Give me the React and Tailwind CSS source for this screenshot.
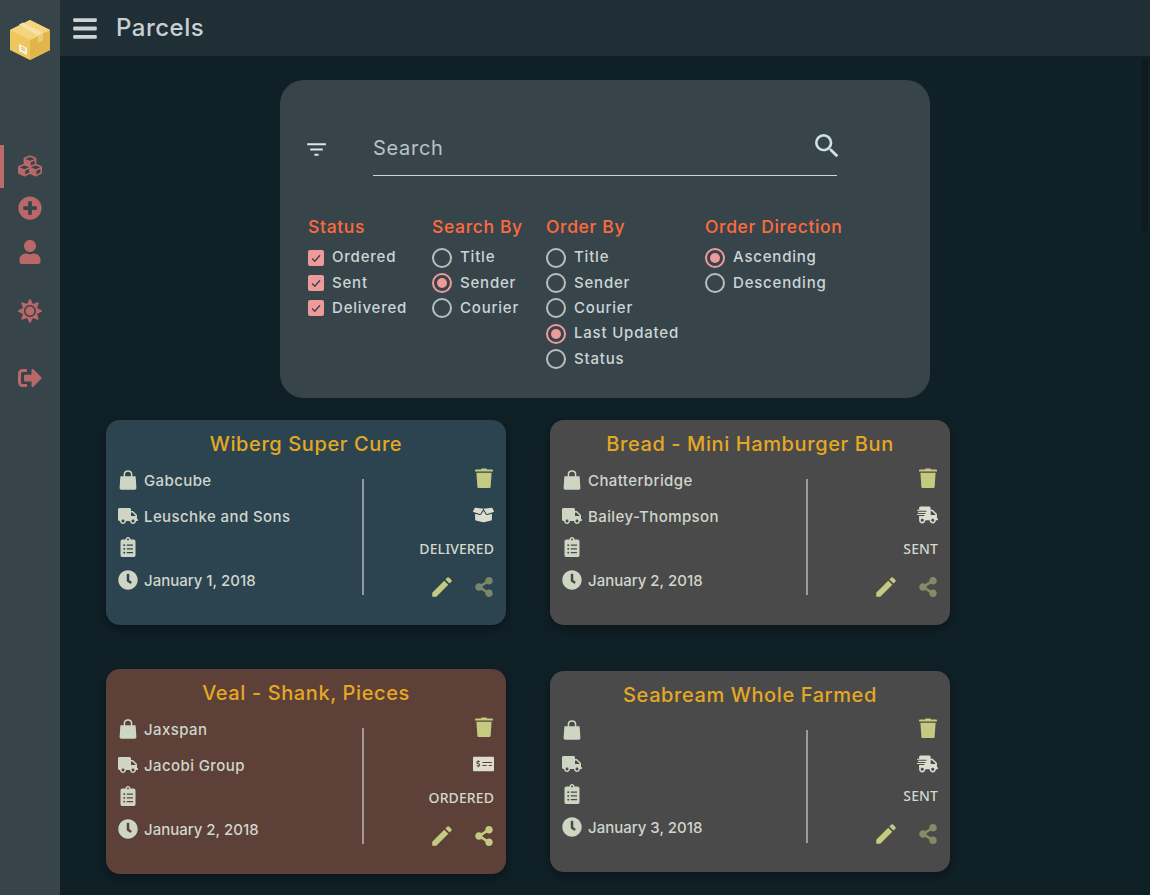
import React from "react";
import { FaBars, FaCubes, FaPlusCircle, FaUser, FaSun, FaSignOutAlt, FaTruck, FaClipboardList, FaClock, FaBoxOpen, FaShippingFast, FaMoneyCheckAlt, FaShareAlt } from "react-icons/fa";
import { MdFilterList, MdSearch, MdEdit } from "react-icons/md";

const font = { fontFamily: "Inter, 'Noto Sans', sans-serif" };

function Logo() {
  return (
    <svg viewBox="0 0 40 40" className="w-10 h-10">
      <path d="M20 0L40 10V30L20 40L0 30V10Z" fill="#eec65e" />
      <path d="M20 20L40 10V30L20 40Z" fill="#e0b54c" />
      <path d="M20 0L40 10L20 20L0 10Z" fill="#f4d47c" />
      <path d="M9 4.5L13 2.5L33 13V20L28 22.5V15.5Z" fill="#f6e2a8" />
      <path d="M28 15.5L33 13V20L28 22.5Z" fill="#e9c97a" />
      <path d="M9 24L17 28V35L9 31Z" fill="#f7f3e6" />
      <path d="M11 27L15 29M11 29L15 31" stroke="#d9b24e" strokeWidth="1" />
    </svg>
  );
}

function Trash({ className }) {
  return (
    <svg viewBox="0 0 18 20" className={className} fill="currentColor">
      <path d="M6 1.5Q6 .5 7 .5H11Q12 .5 12 1.5H17Q18 1.5 18 2.5V3.6H0V2.5Q0 1.5 1 1.5Z" />
      <path d="M1.4 4.8H16.6L15.6 19Q15.5 20 14.5 20H3.5Q2.5 20 2.4 19Z" />
    </svg>
  );
}

function Bag({ className }) {
  return (
    <svg viewBox="0 0 20 20" className={className} fill="currentColor">
      <path d="M2.4 6.2H17.6L18.4 18Q18.5 19.8 16.7 19.8H3.3Q1.5 19.8 1.6 18Z" />
      <path d="M6.4 8V4.4Q6.4 1 10 1Q13.6 1 13.6 4.4V8" fill="none" stroke="currentColor" strokeWidth="1.5" />
    </svg>
  );
}

function Check({ label }) {
  return (
    <div className="flex items-center h-[25.3px]">
      <span className="w-4 h-4 rounded-[2px] bg-[#ef9a9a] flex items-center justify-center mr-2">
        <svg viewBox="0 0 16 16" className="w-4 h-4"><path d="M4 8.5L6.8 11.2L12 5.2" fill="none" stroke="#37444b" strokeWidth="1.4" /></svg>
      </span>
      <span className="text-[15px] font-medium text-[#ccd4d6] whitespace-nowrap tracking-[0.8px]">{label}</span>
    </div>
  );
}

function Radio({ label, on }) {
  return (
    <div className="flex items-center h-[25.3px]">
      <span className={`w-5 h-5 rounded-full border-2 flex items-center justify-center mr-2 ${on ? "border-[#ef9a9a]" : "border-[#b9bfc1]"}`}>
        {on && <span className="w-2.5 h-2.5 rounded-full bg-[#ef9a9a]" />}
      </span>
      <span className="text-[15px] font-medium text-[#ccd4d6] whitespace-nowrap tracking-[0.8px]">{label}</span>
    </div>
  );
}

function Group({ title, width, children }) {
  return (
    <div className={width}>
      <div className="text-[#ff6a3d] text-[17.5px] font-medium leading-[26px] mb-[5px] whitespace-nowrap tracking-[0.65px]">{title}</div>
      {children}
    </div>
  );
}

function Row({ icon: Icon, text, iconClass, className, tracking = "tracking-[0.4px]" }) {
  return (
    <div className={`flex items-center ${className}`}>
      <span className="w-[26px] shrink-0 flex"><Icon className={iconClass} /></span>
      {text && <span className={`h-[26px] text-[15px] leading-[28px] font-medium text-[#d0d6cc] whitespace-nowrap ${tracking}`}>{text}</span>}
    </div>
  );
}

function Card({ title, bg, seller, courier, date, status, StatusIcon, compact, shareClass }) {
  return (
    <div className={`w-[400px] rounded-[14px] shadow-[0_4px_10px_rgba(0,0,0,0.35)] px-3 ${bg} ${compact ? "pb-[30px]" : "pb-[31px]"}`}>
      <div className="h-[47px] text-center leading-[48px] text-[20px] font-medium text-[#e5a823] whitespace-nowrap tracking-[0.6px]">{title}</div>
      <div className={`flex ${compact ? "h-[124px]" : "h-[127px]"}`}>
        <div className="w-[244px] shrink-0">
          <Row icon={Bag} text={seller} iconClass="w-[20px] h-[20px] text-[#cfd5c3]" className="mb-[10px] min-h-[24px]" />
          <Row icon={FaTruck} text={courier} iconClass="w-[20px] h-[20px] text-[#cfd5c3]" className="mb-[6px] min-h-[24px]" />
          <Row icon={FaClipboardList} iconClass="w-[20px] h-[20px] text-[#cfd5c3]" className="mb-[8px] min-h-[24px]" />
          <Row icon={FaClock} text={date} tracking="tracking-[0px]" iconClass="w-[20px] h-[20px] text-[#cfd5c3]" className="min-h-[24px]" />
        </div>
        <div className="w-[1.5px] mt-3 mb-[-1px] bg-[#d0d6cc] opacity-60" />
        <div className="flex-1 flex flex-col items-end">
          <Trash className={`shrink-0 w-[18px] h-5 mr-px text-[#c5ca81] ${compact ? "" : "mt-[1px]"}`} />
          <StatusIcon className={`shrink-0 w-[21px] h-[18px] text-[#dcdccf] ${compact ? "mt-[17px]" : "mt-[18px]"}`} />
          <div className={`shrink-0 ${compact ? "mt-[13px]" : "mt-[15px]"} text-[14px] font-medium leading-5 text-[#d3d8ce] tracking-[0.1px]`} style={{ fontFamily: "'Noto Sans', sans-serif" }}>{status}</div>
          <div className="shrink-0 flex items-center mt-[18px]">
            <MdEdit className="w-[26px] h-[26px] -my-[3px] text-[#c5ca81] mr-[20px]" />
            <FaShareAlt className={`w-[18px] h-5 mr-px text-[#c5ca81] ${shareClass}`} />
          </div>
        </div>
      </div>
    </div>
  );
}

export default function App() {
  return (
    <div className="flex h-screen overflow-hidden bg-[#102027] relative" style={font}>
      <aside className="w-[60px] shrink-0 bg-[#37454b] flex flex-col">
        <div className="pt-5 pl-[10px] h-[145px]"><Logo /></div>
        <div className="border-l-4 border-[#bb6b6b] h-[43px] flex items-center justify-center pr-1 pb-[2px] text-[#b96767]"><FaCubes className="w-6 h-6" /></div>
        <div className="flex flex-col items-center text-[#b96767]">
          <FaPlusCircle className="w-6 h-6 mt-2" />
          <FaUser className="w-[22px] h-6 mt-[20px]" />
          <FaSun className="w-6 h-6 mt-[35px]" />
          <FaSignOutAlt className="w-6 h-6 mt-[43px]" />
        </div>
      </aside>
      <div className="flex-1 min-w-0 flex flex-col">
        <header className="h-14 shrink-0 bg-[#202e36] flex items-center pl-[13px]">
          <FaBars className="w-6 h-[27px] text-[#ccd3d5]" />
          <span className="ml-[19px] text-[24px] font-medium text-[#c9d0d3] tracking-[0.5px]">Parcels</span>
        </header>
        <main className="flex-1 pt-6">
          <section className="w-[650px] h-[318px] mx-auto rounded-[24px] bg-[#37454b] pl-7 pt-[46px]">
            <div className="flex items-start">
              <MdFilterList className="w-[25px] h-[25px] mt-[11px] -ml-1 mr-[44px] shrink-0 text-[#dfe3e4]" />
              <div className="w-[464px] h-[50px] pb-[6px] border-b border-[#cfd5d7] flex items-center justify-between">
                <span className="text-[20px] text-[#b9c2c6] tracking-[0.7px]">Search</span>
                <MdSearch className="w-8 h-8 -mr-[6px] -mt-1 text-[#cfe0e8]" />
              </div>
            </div>
            <div className="flex mt-[38px]">
              <Group title="Status" width="w-[124px]">
                <Check label="Ordered" /><Check label="Sent" /><Check label="Delivered" />
              </Group>
              <Group title="Search By" width="w-[114px]">
                <Radio label="Title" /><Radio label="Sender" on /><Radio label="Courier" />
              </Group>
              <Group title="Order By" width="w-[159px]">
                <Radio label="Title" /><Radio label="Sender" /><Radio label="Courier" /><Radio label="Last Updated" on /><Radio label="Status" />
              </Group>
              <Group title="Order Direction" width="w-[140px]">
                <Radio label="Ascending" on /><Radio label="Descending" />
              </Group>
            </div>
          </section>
          <div className="grid grid-cols-[400px_400px] gap-x-[44px] gap-y-[44px] items-center pl-[46px] pt-[22px]">
            <Card title="Wiberg Super Cure" bg="bg-[#2c4450]" seller="Gabcube" courier="Leuschke and Sons" date="January 1, 2018" status="DELIVERED" StatusIcon={FaBoxOpen} shareClass="opacity-50" />
            <Card title="Bread - Mini Hamburger Bun" bg="bg-[#4a4a4a]" seller="Chatterbridge" courier="Bailey-Thompson" date="January 2, 2018" status="SENT" StatusIcon={FaShippingFast} shareClass="opacity-50" />
            <Card title="Veal - Shank, Pieces" bg="bg-[#5d4037]" seller="Jaxspan" courier="Jacobi Group" date="January 2, 2018" status="ORDERED" StatusIcon={FaMoneyCheckAlt} shareClass="" />
            <Card title="Seabream Whole Farmed" bg="bg-[#4a4a4a]" date="January 3, 2018" status="SENT" StatusIcon={FaShippingFast} shareClass="opacity-50" compact />
          </div>
        </main>
      </div>
      <div className="absolute right-[2px] top-[58px] w-[6px] h-[175px] rounded-full bg-[#0d1a21]" />
    </div>
  );
}
